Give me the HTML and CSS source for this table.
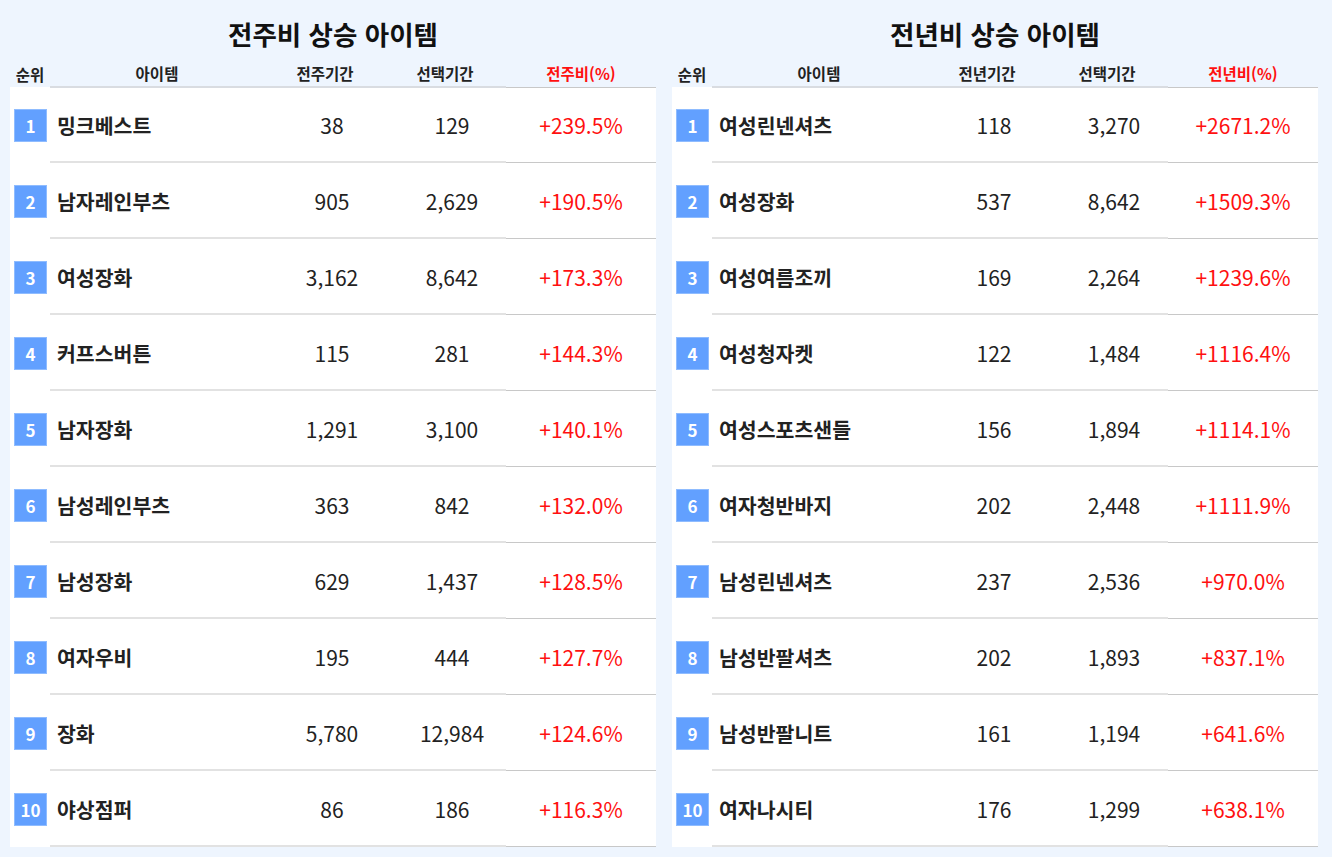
FILE: index.html
```html
<!DOCTYPE html>
<html lang="ko">
<head>
<meta charset="utf-8">
<title>상승 아이템</title>
<link rel="stylesheet" href="styles.css">
</head>
<body>
<div class="page">
  <section class="panel">
    <h2 class="title">전주비 상승 아이템</h2>
    <div class="row head">
      <div class="c rank">순위</div>
      <div class="c item">아이템</div>
      <div class="c prev">전주기간</div>
      <div class="c sel">선택기간</div>
      <div class="c pct">전주비(%)</div>
    </div>
    <div class="body">
      <div class="row"><div class="c rank"><span class="badge">1</span></div><div class="c item">밍크베스트</div><div class="c prev">38</div><div class="c sel">129</div><div class="c pct">+239.5%</div></div>
      <div class="row"><div class="c rank"><span class="badge">2</span></div><div class="c item">남자레인부츠</div><div class="c prev">905</div><div class="c sel">2,629</div><div class="c pct">+190.5%</div></div>
      <div class="row"><div class="c rank"><span class="badge">3</span></div><div class="c item">여성장화</div><div class="c prev">3,162</div><div class="c sel">8,642</div><div class="c pct">+173.3%</div></div>
      <div class="row"><div class="c rank"><span class="badge">4</span></div><div class="c item">커프스버튼</div><div class="c prev">115</div><div class="c sel">281</div><div class="c pct">+144.3%</div></div>
      <div class="row"><div class="c rank"><span class="badge">5</span></div><div class="c item">남자장화</div><div class="c prev">1,291</div><div class="c sel">3,100</div><div class="c pct">+140.1%</div></div>
      <div class="row"><div class="c rank"><span class="badge">6</span></div><div class="c item">남성레인부츠</div><div class="c prev">363</div><div class="c sel">842</div><div class="c pct">+132.0%</div></div>
      <div class="row"><div class="c rank"><span class="badge">7</span></div><div class="c item">남성장화</div><div class="c prev">629</div><div class="c sel">1,437</div><div class="c pct">+128.5%</div></div>
      <div class="row"><div class="c rank"><span class="badge">8</span></div><div class="c item">여자우비</div><div class="c prev">195</div><div class="c sel">444</div><div class="c pct">+127.7%</div></div>
      <div class="row"><div class="c rank"><span class="badge">9</span></div><div class="c item">장화</div><div class="c prev">5,780</div><div class="c sel">12,984</div><div class="c pct">+124.6%</div></div>
      <div class="row"><div class="c rank"><span class="badge">10</span></div><div class="c item">야상점퍼</div><div class="c prev">86</div><div class="c sel">186</div><div class="c pct">+116.3%</div></div>
    </div>
  </section>
  <section class="panel">
    <h2 class="title">전년비 상승 아이템</h2>
    <div class="row head">
      <div class="c rank">순위</div>
      <div class="c item">아이템</div>
      <div class="c prev">전년기간</div>
      <div class="c sel">선택기간</div>
      <div class="c pct">전년비(%)</div>
    </div>
    <div class="body">
      <div class="row"><div class="c rank"><span class="badge">1</span></div><div class="c item">여성린넨셔츠</div><div class="c prev">118</div><div class="c sel">3,270</div><div class="c pct">+2671.2%</div></div>
      <div class="row"><div class="c rank"><span class="badge">2</span></div><div class="c item">여성장화</div><div class="c prev">537</div><div class="c sel">8,642</div><div class="c pct">+1509.3%</div></div>
      <div class="row"><div class="c rank"><span class="badge">3</span></div><div class="c item">여성여름조끼</div><div class="c prev">169</div><div class="c sel">2,264</div><div class="c pct">+1239.6%</div></div>
      <div class="row"><div class="c rank"><span class="badge">4</span></div><div class="c item">여성청자켓</div><div class="c prev">122</div><div class="c sel">1,484</div><div class="c pct">+1116.4%</div></div>
      <div class="row"><div class="c rank"><span class="badge">5</span></div><div class="c item">여성스포츠샌들</div><div class="c prev">156</div><div class="c sel">1,894</div><div class="c pct">+1114.1%</div></div>
      <div class="row"><div class="c rank"><span class="badge">6</span></div><div class="c item">여자청반바지</div><div class="c prev">202</div><div class="c sel">2,448</div><div class="c pct">+1111.9%</div></div>
      <div class="row"><div class="c rank"><span class="badge">7</span></div><div class="c item">남성린넨셔츠</div><div class="c prev">237</div><div class="c sel">2,536</div><div class="c pct">+970.0%</div></div>
      <div class="row"><div class="c rank"><span class="badge">8</span></div><div class="c item">남성반팔셔츠</div><div class="c prev">202</div><div class="c sel">1,893</div><div class="c pct">+837.1%</div></div>
      <div class="row"><div class="c rank"><span class="badge">9</span></div><div class="c item">남성반팔니트</div><div class="c prev">161</div><div class="c sel">1,194</div><div class="c pct">+641.6%</div></div>
      <div class="row"><div class="c rank"><span class="badge">10</span></div><div class="c item">여자나시티</div><div class="c prev">176</div><div class="c sel">1,299</div><div class="c pct">+638.1%</div></div>
    </div>
  </section>
</div>
</body>
</html>
```

FILE: styles.css
```css
html, body {
  margin: 0;
  padding: 0;
  background: #eef5fe;
}
body {
  font-family: "Noto Sans CJK KR", "Noto Sans", sans-serif;
  color: #222;
}
.page {
  display: grid;
  grid-template-columns: 646px 646px;
  column-gap: 16px;
  padding: 0 14px 0 10px;
}
.title {
  margin: 0;
  height: 62px;
  padding-top: 4px;
  box-sizing: border-box;
  display: flex;
  align-items: center;
  justify-content: center;
  font-size: 26.5px;
  font-weight: 700;
  color: #111;
}
.row {
  display: grid;
  grid-template-columns: 40px 222px 120px 114px 150px;
  height: 76px;
}
.c {
  display: flex;
  align-items: center;
  justify-content: center;
  box-sizing: border-box;
  border-bottom: 2px solid #e2e2e2;
  font-size: 21px;
  padding-top: 2px;
}
.c.rank {
  border-bottom: none;
  padding-top: 0;
}
.c.pct {
  border-bottom: 1px solid #c8c8c8;
  color: #ff1010;
  padding-bottom: 1px;
}
.c.item {
  justify-content: flex-start;
  padding-left: 7px;
  font-size: 20.5px;
  font-weight: 700;
}
.c.sel {
  padding-left: 6px;
}
.body {
  background: #fff;
}
.row.head {
  height: 25px;
}
.head .c {
  font-size: 15.5px;
  font-weight: 700;
  border-bottom-color: #d9dce1;
  padding-top: 0;
  padding-bottom: 2px;
}
.head .c.item {
  justify-content: center;
  padding-left: 0;
  padding-right: 8px;
  font-size: 15.5px;
}
.head .c.prev {
  padding-right: 14px;
}
.head .c.sel {
  padding-left: 0;
  padding-right: 8px;
}
.head .c.pct {
  border-bottom-color: #c8c8c8;
  padding-bottom: 3px;
}
.badge {
  width: 31px;
  height: 31px;
  display: flex;
  align-items: center;
  justify-content: center;
  background: #62a0ff;
  border: 1px solid #8fbcff;
  color: #fff;
  font-size: 17px;
  font-weight: 700;
  margin-left: 1px;
  margin-top: 1px;
}
```
